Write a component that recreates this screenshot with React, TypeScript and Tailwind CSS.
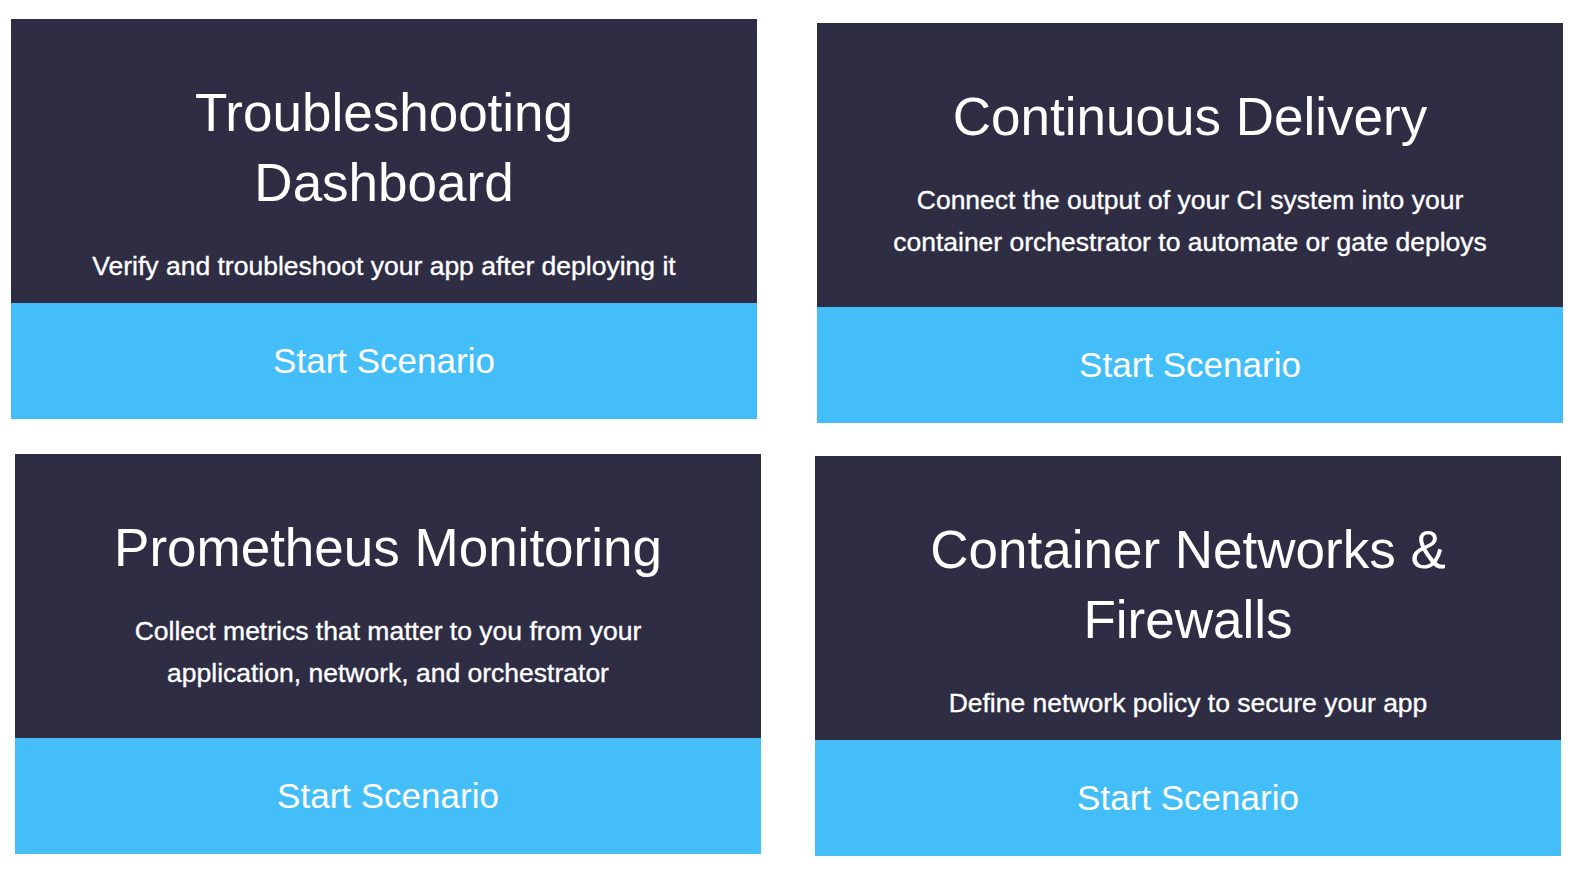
import React from "react";

type CardProps = {
  title: string;
  subtitle: string;
  className?: string;
};

function Card({ title, subtitle, className = "" }: CardProps) {
  return (
    <div className={`flex w-[746px] flex-col ${className}`}>
      <div className="flex h-[284px] flex-col items-center bg-[#2e2d44] px-[60px] pt-[59px] text-center text-white">
        <h2 className="text-[53px] leading-[70px] font-normal">{title}</h2>
        <p className="mt-[27px] text-[26.5px] leading-[42px] [-webkit-text-stroke:0.35px_white]">
          {subtitle}
        </p>
      </div>
      <button className="flex h-[116px] items-center justify-center bg-[#44bef9] text-[35px] text-white">
        Start Scenario
      </button>
    </div>
  );
}

export default function App() {
  return (
    <div
      className="min-h-[896px] w-[1580px] bg-white"
      style={{ fontFamily: '"Liberation Sans", Arial, sans-serif' }}
    >
      <div className="flex items-start gap-[60px] pl-[11px] pt-[19px]">
        <Card
          title="Troubleshooting Dashboard"
          subtitle="Verify and troubleshoot your app after deploying it"
        />
        <Card
          className="mt-[4px]"
          title="Continuous Delivery"
          subtitle="Connect the output of your CI system into your container orchestrator to automate or gate deploys"
        />
      </div>
      <div className="mt-[31px] flex items-start gap-[54px] pl-[15px]">
        <Card
          title="Prometheus Monitoring"
          subtitle="Collect metrics that matter to you from your application, network, and orchestrator"
        />
        <Card
          className="mt-[2px]"
          title="Container Networks & Firewalls"
          subtitle="Define network policy to secure your app"
        />
      </div>
    </div>
  );
}
